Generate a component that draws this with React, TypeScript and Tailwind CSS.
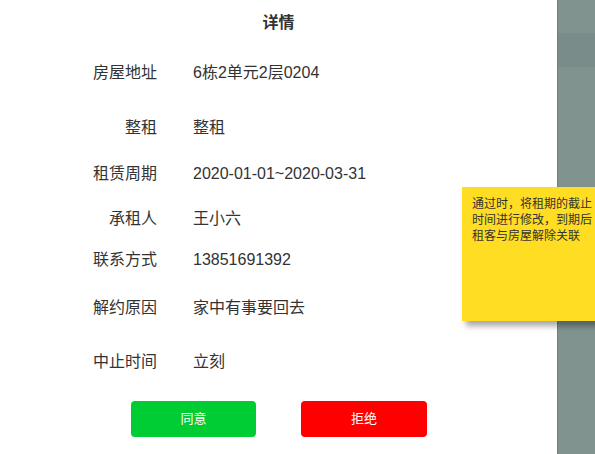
import React from 'react';

const rows: { label: string; value: string; mt: string }[] = [
  { label: '房屋地址', value: '6栋2单元2层0204', mt: 'mt-[26px]' },
  { label: '整租', value: '整租', mt: 'mt-[31px]' },
  { label: '租赁周期', value: '2020-01-01~2020-03-31', mt: 'mt-[22px]' },
  { label: '承租人', value: '王小六', mt: 'mt-[21px]' },
  { label: '联系方式', value: '13851691392', mt: 'mt-[17px]' },
  { label: '解约原因', value: '家中有事要回去', mt: 'mt-[24px]' },
  { label: '中止时间', value: '立刻', mt: 'mt-[30px]' },
];

export default function App() {
  return (
    <div
      className="relative flex h-[454px] w-[595px] overflow-hidden bg-white text-[#333]"
      style={{ fontFamily: '"Liberation Sans", "Noto Sans CJK SC", sans-serif' }}
    >
      <div className="w-[557px] shrink-0 pt-[11px]">
        <h1 className="text-center text-[16px] font-bold leading-6">详情</h1>
        {rows.map((r) => (
          <div key={r.label} className={`flex h-6 items-center text-[16px] ${r.mt}`}>
            <span className="w-[157px] text-right">{r.label}</span>
            <span className="ml-9">{r.value}</span>
          </div>
        ))}
        <div className="mt-[27px] flex">
          <button className="ml-[131px] h-9 w-[125px] rounded bg-[#00cc33] text-[13px] text-white">
            同意
          </button>
          <button className="ml-[45px] h-9 w-[126px] rounded bg-[#ff0000] text-[13px] text-white">
            拒绝
          </button>
        </div>
      </div>
      <div className="flex flex-1 flex-col border-l border-[#6e7f7c] bg-[#80938f]">
        <div className="mt-[33px] h-[34px] bg-[#7a8c89]" />
      </div>
      <div className="absolute left-[462px] top-[187px] h-[134px] w-[140px] bg-[#ffdd22] pl-[10px] pt-[9px] shadow-[4px_5px_6px_rgba(0,0,0,0.35)]">
        <p className="w-[121px] text-[12px] leading-[16px] text-[#333]">
          通过时，将租期的截止时间进行修改，到期后租客与房屋解除关联
        </p>
      </div>
    </div>
  );
}
